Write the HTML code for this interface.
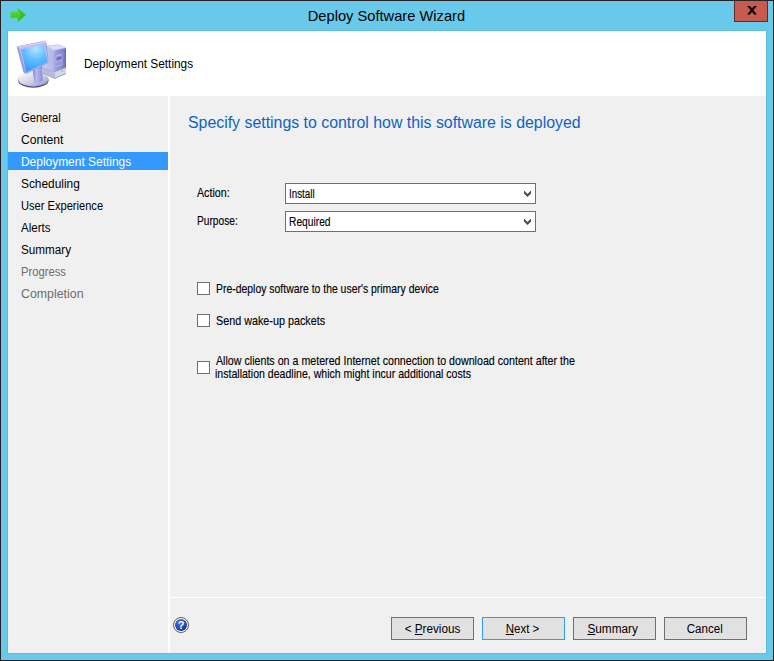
<!DOCTYPE html>
<html lang="en">
<head>
<meta charset="utf-8">
<title>Deploy Software Wizard</title>
<style>
html,body{margin:0;padding:0;}
body{width:774px;height:661px;overflow:hidden;background:#68c9ea;font-family:"Liberation Sans",Arial,sans-serif;font-size:11px;color:#000;position:relative;}
.abs{position:absolute;}
.sx{display:inline-block;transform-origin:0 50%;white-space:nowrap;}
.btn .sx{transform-origin:50% 50%;position:relative;left:-1px;}
#win{left:0;top:0;width:772px;height:659px;border:1px solid #282122;background:#68c9ea;}
#title{left:0;top:7px;width:772px;text-align:center;font-size:15px;line-height:18px;color:#000;white-space:nowrap;}
#close{left:734px;top:1px;width:32px;height:20px;background:#c75b50;border:1px solid #5e2b27;border-top:none;}
#content{left:8px;top:31px;width:758px;height:622px;background:#fff;box-shadow:0 0 0 1px #5fbcde;}
#hdrtext{left:84px;top:56px;font-size:12px;line-height:16px;white-space:nowrap;}
#side{left:8px;top:96px;width:160px;height:557px;background:#f0f0f0;}
#main{left:170px;top:96px;width:596px;height:557px;background:#f0f0f0;}
#hline{left:170px;top:597px;width:596px;height:1px;background:#fff;}
.nav{left:8px;width:160px;height:18px;line-height:18px;font-size:12px;white-space:nowrap;}
.nav span{position:absolute;left:13px;top:1px;}
.nav.sel{background:#3399ff;color:#fff;}
.nav.dis{color:#6d6d6d;}
#heading{left:188px;top:112px;font-size:16px;line-height:20px;color:#0a64c8;white-space:nowrap;}
.lbl{font-size:11px;line-height:13px;white-space:nowrap;}
.lbl.sx,.combo .sx{transform-origin:0 78%;-webkit-text-stroke:0.12px #000;}
.combo{left:285px;width:249px;height:19px;border:1px solid #707070;background:#fff;}
.combo span{position:absolute;left:3px;top:3.6px;font-size:11px;line-height:13px;}
.combo svg{position:absolute;left:238px;top:7px;}
.cb{left:197px;width:11px;height:11px;border:1px solid #707070;background:#fff;}
.btn{top:617px;width:81px;height:21px;border:1px solid #707070;background:#e1e1e1;font-size:12px;line-height:23px;text-align:center;white-space:nowrap;overflow:hidden;}
.btn.def{border-color:#3399ff;}
u{text-decoration:underline;}
</style>
</head>
<body>
<div id="win" class="abs"></div>
<div id="title" class="abs"><span id="titletx" class="sx" style="transform-origin:50% 50%;transform:scaleX(.978)">Deploy Software Wizard</span></div>
<svg class="abs" style="left:9px;top:7px" width="19" height="16" viewBox="0 0 19 16"><defs><linearGradient id="ag" x1="0" y1="0" x2="0" y2="1"><stop offset="0" stop-color="#63e04e"/><stop offset="1" stop-color="#2cba1e"/></linearGradient></defs><path d="M1.5 4.5 H8.5 V1 L17 8 L8.5 15 V11 H1.5 Z" fill="url(#ag)" stroke="#5fe04a" stroke-width="0.6"/><path d="M8.5 1 L17 8 L8.5 15 L12 8 Z" fill="#2fb520" opacity="0.6"/></svg>
<div id="close" class="abs"><svg class="abs" style="left:12px;top:5px" width="10" height="9" viewBox="0 0 10 9"><path d="M0.2 0 H3 L5 2.6 L7 0 H9.8 L6.4 4.2 L9.9 8.5 H7.1 L5 5.8 L2.9 8.5 H0.1 L3.6 4.2 Z" fill="#000"/></svg></div>
<div id="content" class="abs"></div>
<div id="hdrtext" class="abs sx" style="transform:scaleX(.985)">Deployment Settings</div>
<svg id="pcicon" class="abs" style="left:14px;top:38px" width="56" height="54" viewBox="0 0 685 661">
<defs>
<radialGradient id="scr" cx="0.55" cy="0.12" r="0.95"><stop offset="0" stop-color="#b4e6ff"/><stop offset="0.45" stop-color="#62bdff"/><stop offset="1" stop-color="#2a94fb"/></radialGradient>
<linearGradient id="bas" x1="0" y1="0" x2="1" y2="1"><stop offset="0" stop-color="#ffffff"/><stop offset="0.55" stop-color="#d0d0e2"/><stop offset="1" stop-color="#8e8ec0"/></linearGradient>
<linearGradient id="twl" x1="0" y1="0" x2="1" y2="0"><stop offset="0" stop-color="#cfd0f0"/><stop offset="1" stop-color="#b2b4e6"/></linearGradient>
<linearGradient id="twr" x1="0" y1="0" x2="1" y2="0"><stop offset="0" stop-color="#a2a4e6"/><stop offset="0.8" stop-color="#7e80cc"/><stop offset="1" stop-color="#6466b4"/></linearGradient>
<linearGradient id="nek" x1="0" y1="0" x2="1" y2="0"><stop offset="0" stop-color="#7476cc"/><stop offset="0.35" stop-color="#b8baf0"/><stop offset="1" stop-color="#8c8edc"/></linearGradient>
</defs>
<!-- tower -->
<path d="M392 98 L545 82 L636 122 L490 152 Z" fill="#dcdcf8" stroke="#a8aae0" stroke-width="6"/>
<path d="M392 98 L490 152 L490 400 L350 372 L330 330 L392 250 Z" fill="url(#twl)"/>
<path d="M490 152 L636 122 L636 436 L502 496 L490 490 Z" fill="url(#twr)"/>
<path d="M350 372 L500 410 L500 496 L350 430 Z" fill="#babadc"/>
<path d="M500 410 L636 362 L636 436 L500 496 Z" fill="#d6d6e6"/>
<path d="M350 372 L500 410 L636 362" fill="none" stroke="#8c8ecc" stroke-width="8"/>
<path d="M350 430 L500 496 L636 436" fill="none" stroke="#7a7ab8" stroke-width="7"/>
<path d="M510 215 L592 190 L592 330 L510 360 Z" fill="#b4b6ee"/>
<path d="M518 232 L586 211 L586 262 L518 284 Z" fill="#8082c8"/>
<path d="M518 296 L586 274 L586 322 L518 346 Z" fill="#9698da"/>
<path d="M524 258 L580 240" stroke="#5a5ca8" stroke-width="9"/>
<circle cx="593" cy="404" r="11" fill="#6fe66a"/>
<!-- base -->
<ellipse cx="236" cy="516" rx="187" ry="93" fill="#5a4a9c"/>
<ellipse cx="236" cy="505" rx="184" ry="88" fill="url(#bas)"/>
<!-- neck -->
<path d="M226 380 L345 310 L352 520 Q300 562 252 548 Z" fill="url(#nek)"/>
<!-- monitor bezel -->
<path d="M38 108 L378 38 L392 60 L418 300 L150 436 L120 420 Z" fill="#9a9cdc" stroke="#8486d0" stroke-width="7" stroke-linejoin="round"/>
<path d="M38 108 L378 38 L392 60 L70 128 Z" fill="#d0d0ee"/>
<path d="M60 122 L385 58 L416 298 L150 432 Z" fill="#bcbef0"/>
<path d="M86 142 L366 86 L410 294 L150 420 Z" fill="url(#scr)"/>
</svg>
<div id="side" class="abs"></div>
<div id="main" class="abs"></div>
<div id="hline" class="abs"></div>

<div class="abs nav" style="top:108px"><span id="n1" class="sx" style="transform:scaleX(.93)">General</span></div>
<div class="abs nav" style="top:130px"><span id="n2" class="sx" style="transform:scaleX(1.01)">Content</span></div>
<div class="abs nav sel" style="top:152px"><span id="n3" class="sx" style="transform:scaleX(.995)">Deployment Settings</span></div>
<div class="abs nav" style="top:174px"><span id="n4" class="sx" style="transform:scaleX(.99)">Scheduling</span></div>
<div class="abs nav" style="top:196px"><span id="n5" class="sx" style="transform:scaleX(.925)">User Experience</span></div>
<div class="abs nav" style="top:218px"><span id="n6" class="sx" style="transform:scaleX(.96)">Alerts</span></div>
<div class="abs nav" style="top:240px"><span id="n7" class="sx" style="transform:scaleX(.975)">Summary</span></div>
<div class="abs nav dis" style="top:262px"><span id="n8" class="sx" style="transform:scaleX(.935)">Progress</span></div>
<div class="abs nav dis" style="top:284px"><span id="n9" class="sx" style="transform:scaleX(1.03)">Completion</span></div>

<div id="heading" class="abs sx" style="transform-origin:0 0;transform:scale(.992,1.06)">Specify settings to control how this software is deployed</div>

<div id="l1" class="abs lbl sx" style="left:197px;top:187px;transform:scale(.97,1.12)">Action:</div>
<div class="abs combo" style="top:183px"><span id="c1" class="sx" style="transform:scale(.89,1.12)">Install</span><svg width="8" height="7" viewBox="0 0 8 7"><path d="M0 0 L0.6 0 L3.5 2.9 L6.4 0 L7 0 L7 2.5 L3.5 6 L0 2.5 Z" fill="#4c4c4c"/></svg></div>
<div id="l2" class="abs lbl sx" style="left:197px;top:215px;transform:scale(.925,1.12)">Purpose:</div>
<div class="abs combo" style="top:211px"><span id="c2" class="sx" style="transform:scale(.93,1.12)">Required</span><svg width="8" height="7" viewBox="0 0 8 7"><path d="M0 0 L0.6 0 L3.5 2.9 L6.4 0 L7 0 L7 2.5 L3.5 6 L0 2.5 Z" fill="#4c4c4c"/></svg></div>

<div class="abs cb" style="top:282px"></div>
<div id="t1" class="abs lbl sx" style="left:216px;top:283px;transform:scale(.948,1.12)">Pre-deploy software to the user's primary device</div>
<div class="abs cb" style="top:314px"></div>
<div id="t2" class="abs lbl sx" style="left:216px;top:315px;transform:scale(.98,1.12)">Send wake-up packets</div>
<div class="abs cb" style="top:361px"></div>
<div id="t3a" class="abs lbl sx" style="left:216px;top:355px;transform:scale(.97,1.12)">Allow clients on a metered Internet connection to download content after the</div>
<div id="t3b" class="abs lbl sx" style="left:215px;top:368px;transform:scale(.96,1.12)">installation deadline, which might incur additional costs</div>

<svg class="abs" style="left:173px;top:617px" width="16" height="16" viewBox="0 0 16 16">
<defs><radialGradient id="hg" cx="0.4" cy="0.3" r="0.8"><stop offset="0" stop-color="#4a78e0"/><stop offset="1" stop-color="#0a2a9a"/></radialGradient></defs>
<circle cx="8" cy="8" r="7.5" fill="#fff" stroke="#5c5c5c" stroke-width="1"/>
<circle cx="8" cy="8" r="6" fill="url(#hg)"/>
<text x="8" y="12" text-anchor="middle" font-family="Liberation Sans, sans-serif" font-weight="bold" font-size="11" fill="#fff">?</text>
</svg>

<div id="b1" class="abs btn" style="left:391px"><span class="sx" style="transform:scaleX(.975);left:0">&lt; <u>P</u>revious</span></div>
<div id="b2" class="abs btn def" style="left:482px"><span class="sx" style="transform:scaleX(.96)"><u>N</u>ext &gt;</span></div>
<div id="b3" class="abs btn" style="left:573px"><span class="sx" style="transform:scaleX(.985);left:-1.5px"><u>S</u>ummary</span></div>
<div id="b4" class="abs btn" style="left:664px"><span class="sx" style="transform:scaleX(.965)">Cancel</span></div>
</body>
</html>
